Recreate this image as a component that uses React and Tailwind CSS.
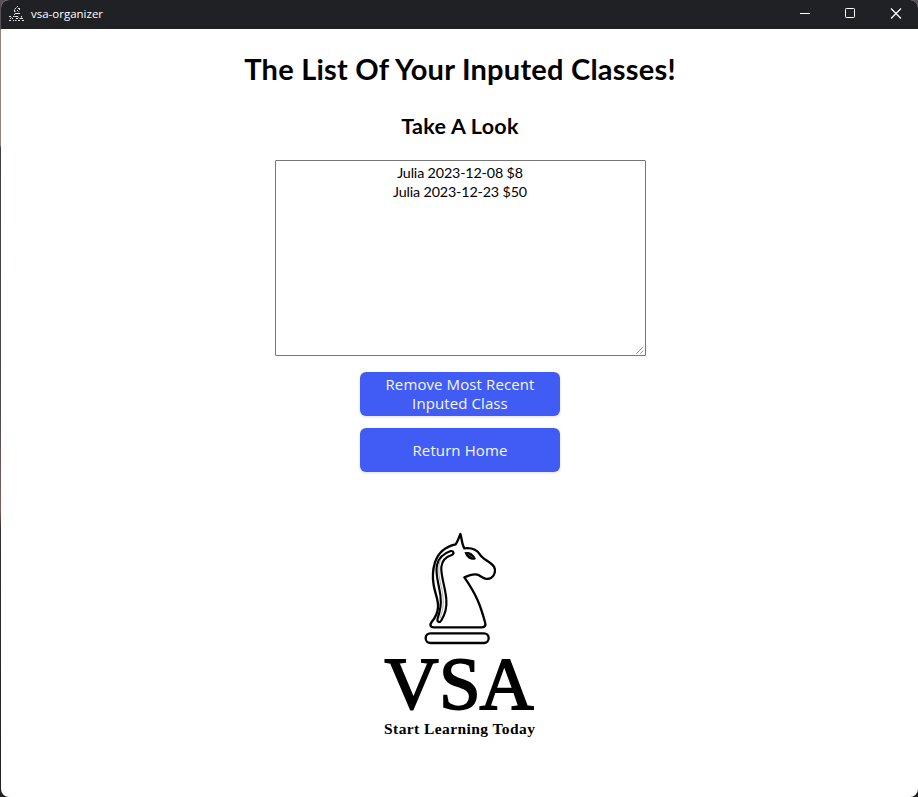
const classes = ["Julia 2023-12-08 $8", "Julia 2023-12-23 $50"];

function AppIcon() {
  return (
    <svg width="16" height="16" viewBox="0 0 16 16" fill="none" shapeRendering="crispEdges">
      <path d="M8 0h1v1h-1zM6 2h1v1h-1zM9 2h2v1h-2zM5 4h1v2h-1zM8 4h1v1h-1zM10 3h1v1h-1zM6 7h5v1h-5zM5 8h1v1h-1zM0 10h2v1h-2zM4 10h1v1h-1zM6 10h3v1h-3zM12 10h1v1h-1zM1 12h1v1h-1zM3 12h1v1h-1zM7 12h2v1h-2zM11 12h3v1h-3zM0 14h2v1h-2zM4 14h1v1h-1zM6 14h1v1h-1zM9 14h2v1h-2zM13 14h2v1h-2z" fill="#e5e5e5" />
      <path d="M7 1h1v1h-1zM5 3h1v1h-1zM9 5h1v1h-1zM6 5h1v1h-1zM2 11h1v1h-1zM9 11h1v1h-1zM12 11h1v1h-1zM10 12h1v1h-1zM5 10h1v1h-1zM7 14h1v1h-1z" fill="#858688" />
    </svg>
  );
}

function TitleBar() {
  return (
    <header className="flex h-[29px] shrink-0 items-start bg-[#202124] text-white">
      <div className="flex h-7 flex-1 items-center gap-1.5 pl-2">
        <AppIcon />
        <span className="font-['Open_Sans',sans-serif] text-[11.5px]">vsa-organizer</span>
      </div>
      <svg width="138" height="28" viewBox="780 0 138 28" fill="none" stroke="#fff">
        <path d="M800 13.5h10" />
        <rect x="845.5" y="8.5" width="9" height="9" rx="0.8" />
        <path d="m891 8.5 10 10m0-10-10 10" strokeWidth="1.2" />
      </svg>
    </header>
  );
}

function Logo() {
  return (
    <svg className="mt-[53px] shrink-0" width="170" height="220" viewBox="0 0 170 220">
      <g transform="translate(35 0) scale(.33333)" fill="none" stroke="#000" strokeWidth="7" strokeLinejoin="round" strokeLinecap="round">
        <path d="M151 27C147 36 145 46 137 58C106 65 84 84 75 112C68 134 67 157 71 180C75 206 86 225 84 247C83 265 75 279 65 291C59 299 60 306 71 307H215C226 307 228 301 225 291C211 240 199 208 163 157C176 151 194 143 207 151C220 159 231 166 244 158C256 151 257 134 252 125C241 110 220 104 210 89C201 74 182 68 163 70C155 56 155 37 151 27Z" />
        <path d="M122 78C101 85 86 99 81 120C76 144 83 166 88 192C94 219 95 238 88 263L83 280C80 291 88 295 94 286C104 270 111 247 109 224C107 190 92 153 94 126C96 105 109 95 125 90C134 86 131 77 122 78Z" strokeWidth="6.5" />
        <path d="M91 105C81 132 89 165 96 195C103 229 100 253 90 280" stroke="#aaa" strokeWidth="3" />
        <path d="M166 83C176 80 190 85 196 102C183 105 169 99 166 83Z" fill="#000" strokeWidth="3" />
        <path d="M174 88l14 9" stroke="#777" strokeWidth="2" />
        <rect x="47" y="325" width="189" height="29" rx="14" />
      </g>
      <text x="9.5 64 104.5" y="183.5" fontFamily="Liberation Serif, serif" fontSize="75" stroke="#000" strokeWidth="1.8">VSA</text>
      <text x="9" y="208.5" textLength="151" lengthAdjust="spacing" fontFamily="Liberation Serif, serif" fontWeight="700" fontSize="15.5">Start Learning Today</text>
    </svg>
  );
}

function Button({ children }) {
  return (
    <button className="flex h-11 w-[200px] shrink-0 items-center justify-center rounded-md bg-[#405cf5] px-5 text-center font-['Open_Sans',sans-serif] text-[15px] leading-[19px] tracking-[0.1px] text-[#f5f7ff] shadow-[0_1px_3px_rgba(50,50,93,0.15)]">
      {children}
    </button>
  );
}

export default function App() {
  return (
    <div className="h-[797px] w-[918px] overflow-hidden bg-[linear-gradient(to_bottom,#5b5058_0,#5b5058_29px,#9b8480_30px,#9b8480_145px,#413d42_148px,#4b474b_400px,#80605a_510px,#303033_530px,#202124_100%)] pl-px">
      <div className="flex h-full flex-col overflow-hidden rounded-[8px] bg-white">
        <TitleBar />
        <main className="flex flex-1 flex-col items-center pl-px font-['Lato',sans-serif] text-black">
          <h1 className="mt-5 whitespace-nowrap text-[29px] font-bold leading-[39px] tracking-[0.23px]">The List Of Your Inputed Classes!</h1>
          <h2 className="mt-6 whitespace-nowrap text-[21.5px] font-bold leading-[29px] tracking-[0.25px]">Take A Look</h2>
          <div className="relative mt-[19px] h-[196px] w-[371px] shrink-0 rounded-[1px] border border-[#767676] pt-[2px] text-center text-[14.3px] leading-[19px] tracking-[-0.15px]">
            {classes.map((item) => <p key={item}>{item}</p>)}
            <svg className="absolute bottom-px right-px" width="8" height="8" viewBox="0 0 8 8" stroke="#555" fill="none">
              <path d="M.5 7.5l7-7M4.5 7.5l3-3" strokeDasharray="1 .4" />
            </svg>
          </div>
          <div className="mt-4 flex flex-col gap-3">
            <Button>Remove Most Recent<br />Inputed Class</Button>
            <Button>Return Home</Button>
          </div>
          <Logo />
        </main>
      </div>
    </div>
  );
}
